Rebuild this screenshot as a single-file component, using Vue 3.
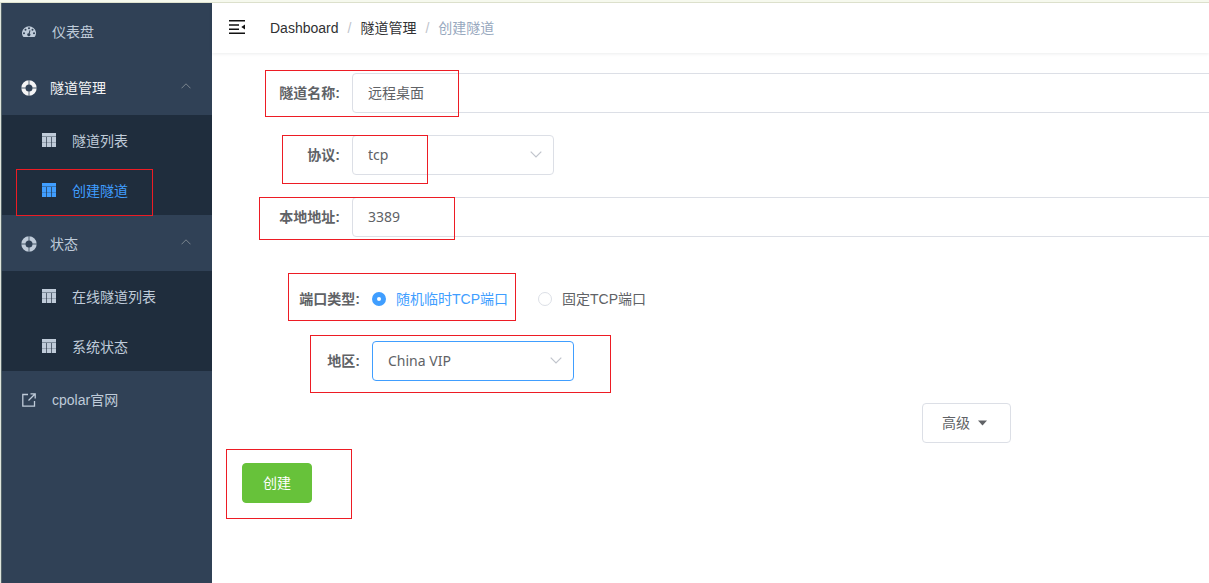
<script setup>
import { ref } from 'vue'

const groups = [
  { title: '隧道管理', active: true, items: [{ text: '隧道列表' }, { text: '创建隧道', current: true }] },
  { title: '状态', items: [{ text: '在线隧道列表' }, { text: '系统状态' }] },
]
const name = ref('远程桌面')
const protocol = ref('tcp')
const address = ref('3389')
const portType = ref('random')
const region = ref('China VIP')
</script>

<template>
  <div class="app">
    <aside class="sidebar">
      <nav>
        <a class="item" href="#">
          <span class="slot">
            <svg width="14" height="14" viewBox="0 0 14 14">
              <path fill="currentColor" fill-rule="evenodd" d="M1 11.600A7 6.800 0 1 1 13 11.600Q12.800 12 12.300 12H1.700Q1.200 12 1 11.600ZM2 7.200a1 1 0 1 0 0 2a1 1 0 0 0 0-2ZM3.500 3.700a1 1 0 1 0 0 2a1 1 0 0 0 0-2ZM7 2.200a1 1 0 1 0 0 2a1 1 0 0 0 0-2ZM10.500 3.700a1 1 0 1 0 0 2a1 1 0 0 0 0-2ZM12 7.200a1 1 0 1 0 0 2a1 1 0 0 0 0-2ZM7.500 5.200l-.8 3a1.500 1.500 0 1 0 1 .3l.8-3Z" />
            </svg>
          </span>
          <span>仪表盘</span>
        </a>

        <section v-for="g in groups" :key="g.title">
          <button type="button" class="item parent" :class="{ active: g.active }">
            <span class="slot">
              <svg width="16" height="16" viewBox="0 0 16 16">
                <circle cx="8" cy="8" r="5.600" fill="none" stroke="currentColor" stroke-width="4.200" />
                <path d="M8 0v5M8 11v5M0 8h5M11 8h5" stroke="#304156" stroke-width="1.400" stroke-opacity=".55" />
              </svg>
            </span>
            <span>{{ g.title }}</span>
            <svg class="fold" width="10" height="6" viewBox="0 0 10 6">
              <path d="M.5 5.300L5 .8l4.500 4.500" fill="none" stroke="currentColor" />
            </svg>
          </button>
          <div class="submenu">
            <a v-for="i in g.items" :key="i.text" class="item sub" :class="{ current: i.current }" href="#">
              <svg width="14" height="14" viewBox="0 0 14 14">
                <path fill="currentColor" d="M0 0h14v14H0z" />
                <path d="M0 3.500h14" stroke="#1f2d3d" stroke-opacity=".4" />
                <path d="M0 9.500h14" stroke="#1f2d3d" stroke-opacity=".25" />
                <path d="M4.500 4v10M9.500 4v10" stroke="#1f2d3d" stroke-opacity=".65" />
              </svg>
              <span>{{ i.text }}</span>
              <i v-if="i.current" class="mark mark-menu"></i>
            </a>
          </div>
        </section>

        <a class="item" href="#">
          <span class="slot">
            <svg width="14" height="14" viewBox="0 0 14 14" fill="none" stroke="currentColor" stroke-width="1.300">
              <path d="M6 1.500H.8v11.700h11.700V8M8.500 .8h4.700v4.700M13 1L6.500 7.500" />
            </svg>
          </span>
          <span>cpolar官网</span>
        </a>
      </nav>
    </aside>

    <div class="page">
      <header class="topbar">
        <button type="button" class="toggle" aria-label="menu">
          <svg width="16" height="14" viewBox="0 0 16 14" fill="none" stroke="#111" stroke-width="1.600">
            <path d="M0 .8h16M0 13.200h16M0 5h10M0 9.200h10" />
            <path d="M16 4.500v5L12.300 7z" fill="#111" stroke="none" />
          </svg>
        </button>
        <nav class="crumbs">
          <a href="#">Dashboard</a><span class="sep">/</span><a href="#">隧道管理</a><span class="sep">/</span><span class="here">创建隧道</span>
        </nav>
      </header>

      <main>
        <form @submit.prevent>
          <div class="row">
            <label class="label" for="name">隧道名称:</label>
            <input id="name" v-model="name" class="field wide" type="text" />
            <i class="mark mark-name"></i>
          </div>
          <div class="row">
            <label class="label" for="protocol">协议:</label>
            <div class="select">
              <select id="protocol" v-model="protocol" class="field">
                <option>tcp</option>
                <option>http</option>
              </select>
              <svg class="arrow" width="12" height="7" viewBox="0 0 12 7"><path d="M.7 .7L6 6l5.300-5.300" fill="none" stroke="#c0c4cc" stroke-width="1.200" /></svg>
            </div>
            <i class="mark mark-protocol"></i>
          </div>
          <div class="row">
            <label class="label" for="address">本地地址:</label>
            <input id="address" v-model="address" class="field wide" type="text" />
            <i class="mark mark-address"></i>
          </div>

          <div class="nested">
            <div class="row">
              <span id="port-type" class="label">端口类型:</span>
              <div class="radios" role="radiogroup" aria-labelledby="port-type">
                <label class="radio"><input v-model="portType" type="radio" value="random" /><span>随机临时TCP端口</span></label>
                <label class="radio"><input v-model="portType" type="radio" value="fixed" /><span>固定TCP端口</span></label>
              </div>
              <i class="mark mark-port"></i>
            </div>
            <div class="row">
              <label class="label" for="region">地区:</label>
              <div class="select">
                <select id="region" v-model="region" class="field focused">
                  <option>China VIP</option>
                  <option>China</option>
                </select>
                <svg class="arrow" width="12" height="7" viewBox="0 0 12 7"><path d="M.7 .7L6 6l5.300-5.300" fill="none" stroke="#c0c4cc" stroke-width="1.200" /></svg>
              </div>
              <i class="mark mark-region"></i>
            </div>
          </div>

          <div class="advanced">
            <button type="button" class="btn more">
              高级
              <svg width="9" height="6" viewBox="0 0 9 6"><path d="M0 .5h9L4.500 5.500z" fill="currentColor" /></svg>
            </button>
          </div>
          <div class="actions">
            <button type="submit" class="btn success">创建</button>
            <i class="mark mark-submit"></i>
          </div>
        </form>
      </main>
    </div>
  </div>
</template>

<style>
body {
  background: #fff;
}
</style>

<style scoped>
* {
  box-sizing: border-box;
}
.app {
  display: flex;
  min-height: 100vh;
  border-top: 2px solid #f6f9ee;
  font: 14px/20px "Liberation Sans", "Noto Sans CJK SC", sans-serif;
  color: #606266;
  overflow: hidden;
}
a {
  color: inherit;
  text-decoration: none;
}
button,
input,
select {
  font: inherit;
  color: inherit;
  margin: 0;
}
.sidebar {
  flex: 0 0 212px;
  border-top: 1px solid #dfe3cf;
  border-left: 1px solid #dfe5dc;
  background: #304156;
  box-shadow: inset 1px 0 #56656b;
  color: #bfcbd9;
}
.item {
  display: flex;
  align-items: center;
  gap: 14px;
  position: relative;
  width: 100%;
  height: 56px;
  padding: 2px 21px 0 19px;
  border: 0;
  background: none;
  text-align: left;
}
.parent {
  gap: 12px;
}
.parent.active {
  color: #f4f4f5;
}
.slot {
  display: flex;
  justify-content: center;
  width: 18px;
}
.fold {
  margin-left: auto;
  margin-bottom: 4px;
  color: #7b858f;
}
.submenu {
  margin-left: 1px;
  background: #1f2d3d;
}
.sub {
  gap: 16px;
  height: 50px;
  padding-left: 40px;
}
.sub > svg {
  margin-bottom: 2px;
}
.current {
  color: #409eff;
}
.page {
  flex: 1;
  min-width: 0;
  border-top: 1px solid #dfe3cf;
}
.topbar {
  display: flex;
  align-items: center;
  gap: 25px;
  height: 50px;
  padding: 0 17px;
  box-shadow: 0 1px 3px rgba(0, 21, 41, 0.08);
}
.toggle {
  display: flex;
  margin-bottom: 2px;
  padding: 0;
  border: 0;
  background: none;
}
.crumbs {
  display: flex;
  color: #303133;
}
.sep {
  margin: 0 9px;
  color: #c0c4cc;
}
.here {
  color: #97a8be;
}
main {
  padding: 20px;
}
.row {
  display: flex;
  align-items: center;
  position: relative;
  height: 40px;
  margin-bottom: 22px;
}
.label {
  flex: 0 0 120px;
  padding-right: 12px;
  text-align: right;
  font-weight: 700;
}
.field {
  display: block;
  width: 100%;
  height: 40px;
  padding: 0 15px;
  border: 1px solid #dcdfe6;
  border-radius: 4px;
  outline: 0;
  background: #fff;
  appearance: none;
  font-family: "Noto Sans", "Noto Sans CJK SC", sans-serif;
}
.wide {
  flex: 1;
  min-width: 0;
  margin-right: -40px;
  padding-bottom: 2px;
}
.focused {
  border-color: #409eff;
}
.select {
  position: relative;
  width: 202px;
}
.arrow {
  position: absolute;
  top: 16px;
  right: 12px;
  pointer-events: none;
}
.nested {
  padding: 20px 20px 0;
}
.radios {
  display: flex;
  gap: 30px;
}
.radio {
  display: flex;
  align-items: center;
  gap: 10px;
  white-space: nowrap;
}
.radio input {
  width: 14px;
  height: 14px;
  border: 1px solid #dcdfe6;
  border-radius: 50%;
  background: #fff;
  appearance: none;
}
.radio input:checked {
  border: 5px solid #409eff;
}
.radio input:checked + span {
  color: #409eff;
}
.btn {
  display: inline-flex;
  align-items: center;
  gap: 8px;
  height: 40px;
  padding: 0 20px;
  border: 1px solid #dcdfe6;
  border-radius: 4px;
  background: #fff;
}
.more {
  padding: 0 23px 0 19px;
}
.success {
  border-color: #67c23a;
  background: #67c23a;
  color: #fff;
}
.advanced {
  display: flex;
  justify-content: flex-end;
  padding-right: 178px;
  margin-bottom: 20px;
}
.actions {
  display: flex;
  position: relative;
  padding-left: 10px;
}
/* Red callout frames laid over the controls */
.mark {
  position: absolute;
  border: 1px solid #ed1c24;
  pointer-events: none;
}
.mark-menu {
  left: 14px;
  top: 4px;
  width: 137px;
  height: 47px;
  z-index: 1;
}
.mark-name {
  left: 33px;
  top: -3px;
  width: 194px;
  height: 47px;
}
.mark-protocol {
  left: 50px;
  top: 0;
  width: 146px;
  height: 49px;
}
.mark-address {
  left: 27px;
  top: 0;
  width: 196px;
  height: 43px;
}
.mark-port {
  left: 36px;
  top: -6px;
  width: 228px;
  height: 48px;
}
.mark-region {
  left: 58px;
  top: -6px;
  width: 301px;
  height: 58px;
}
.mark-submit {
  left: -6px;
  top: -14px;
  width: 126px;
  height: 70px;
}
</style>
